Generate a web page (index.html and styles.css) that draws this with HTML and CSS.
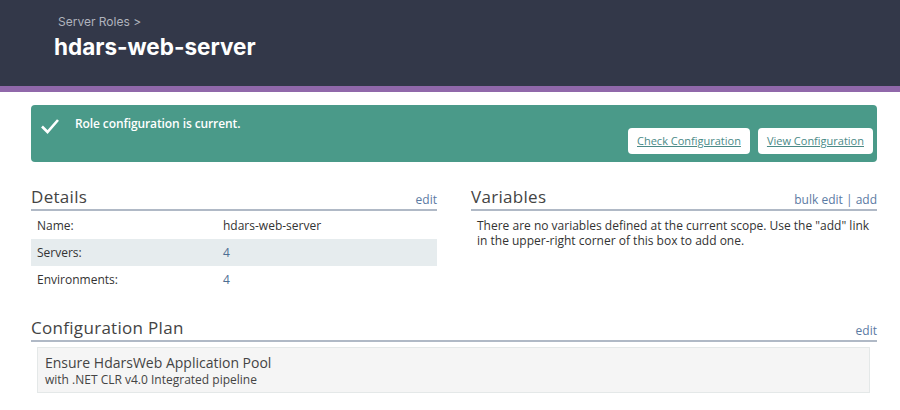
FILE: index.html
```html
<!DOCTYPE html>
<html>
<head>
<meta charset="utf-8">
<link rel="stylesheet" href="styles.css">
</head>
<body>
<header class="page-header">
  <div class="crumb">Server Roles &gt;</div>
  <h1 class="title">hdars-web-server</h1>
</header>
<div class="stripe"></div>
<main class="content">
  <div class="banner">
    <svg class="check" width="20" height="16" viewBox="0 0 20 16"><path d="M2 8.5 L7.5 14 L18 2" fill="none" stroke="#fff" stroke-width="2.6"/></svg>
    <div class="banner-text">Role configuration is current.</div>
    <div class="banner-actions">
      <a class="btn" href="#">Check Configuration</a>
      <a class="btn" href="#">View Configuration</a>
    </div>
  </div>

  <div class="columns">
    <section class="panel">
      <div class="panel-head">
        <h2>Details</h2>
        <div class="links"><a href="#">edit</a></div>
      </div>
      <div class="rows">
        <div class="row"><span class="label">Name:</span><span class="val">hdars-web-server</span></div>
        <div class="row alt"><span class="label">Servers:</span><a class="val link" href="#">4</a></div>
        <div class="row"><span class="label">Environments:</span><a class="val link" href="#">4</a></div>
      </div>
    </section>
    <section class="panel">
      <div class="panel-head">
        <h2>Variables</h2>
        <div class="links"><a href="#">bulk edit</a> <span class="sep">|</span> <a href="#">add</a></div>
      </div>
      <p class="empty">There are no variables defined at the current scope. Use the "add" link in the upper-right corner of this box to add one.</p>
    </section>
  </div>

  <section class="panel plan">
    <div class="panel-head">
      <h2>Configuration Plan</h2>
      <div class="links"><a href="#">edit</a></div>
    </div>
    <div class="plan-item">
      <div class="plan-title">Ensure HdarsWeb Application Pool</div>
      <div class="plan-sub">with .NET CLR v4.0 Integrated pipeline</div>
    </div>
  </section>
</main>
</body>
</html>
```

FILE: styles.css
```css
* { box-sizing: border-box; }
html, body { margin: 0; padding: 0; background: #fff; }
body {
  font-family: "Open Sans", "Liberation Sans", sans-serif;
  color: #333;
  width: 900px;
}
a { color: #5b7aa3; text-decoration: none; }

.page-header {
  background: #333849;
  height: 86px;
  padding: 14px 0 0 54px;
}
.crumb {
  color: #b0b3bd;
  font-family: Inter, "Liberation Sans", sans-serif;
  font-size: 12px;
  padding-left: 4px;
  line-height: 16px;
}
.title {
  margin: 3px 0 0 0;
  color: #fff;
  font-family: Inter, "Liberation Sans", sans-serif;
  font-weight: 700;
  font-size: 22.5px;
  line-height: 28px;
}
.stripe { height: 6px; background: #9068aa; }

.content { padding: 13px 23px 0 31px; }

.banner {
  background: #4a9a89;
  border-radius: 4px;
  height: 57px;
  display: flex;
  padding: 0 4px 0 9px;
}
.check { margin-top: 13px; flex: none; }
.banner-text {
  color: #fff;
  font-size: 12px;
  font-weight: 600;
  letter-spacing: -0.1px;
  margin: 10px 0 0 15px;
  flex: 1;
}
.banner-actions {
  display: flex;
  gap: 8px;
  align-self: flex-end;
  margin-bottom: 8px;
}
.btn {
  background: #fff;
  border-radius: 4px;
  height: 26px;
  line-height: 26px;
  padding: 0 9px;
  font-size: 11px;
  color: #4a8a87;
  text-decoration: underline;
}

.columns {
  display: grid;
  grid-template-columns: 406px 406px;
  gap: 34px;
  margin-top: 22px;
}
.panel-head {
  display: flex;
  justify-content: space-between;
  align-items: flex-end;
  border-bottom: 2px solid #b0b9c6;
  height: 27px;
}
.panel-head h2 {
  margin: 0;
  font-weight: 400;
  font-size: 17px;
  line-height: 24px;
  color: #444;
  letter-spacing: 0.3px;
}
.links { font-size: 12px; line-height: 16px; padding-bottom: 1px; }
.links .sep { color: #5b7aa3; }

.rows { margin-top: 1px; }
.row {
  display: flex;
  height: 27px;
  align-items: center;
  font-size: 12px;
  padding-left: 6px;
}
.row.alt { background: #e6ecee; }
.label { width: 186px; }
.val.link { color: #4e6e92; }

.empty {
  margin: 7px 0 0 6px;
  font-size: 12px;
  line-height: 15px;
}

.plan { margin-top: 22px; }
.plan-item {
  margin: 5px 7px 0 6px;
  background: #f5f5f5;
  border: 1px solid #e4e8e8;
  padding: 6px 7px 0;
  height: 46px;
}
.plan-title { font-size: 14px; line-height: 18px; color: #444; }
.plan-sub { font-size: 12px; line-height: 15px; color: #444; }
```
